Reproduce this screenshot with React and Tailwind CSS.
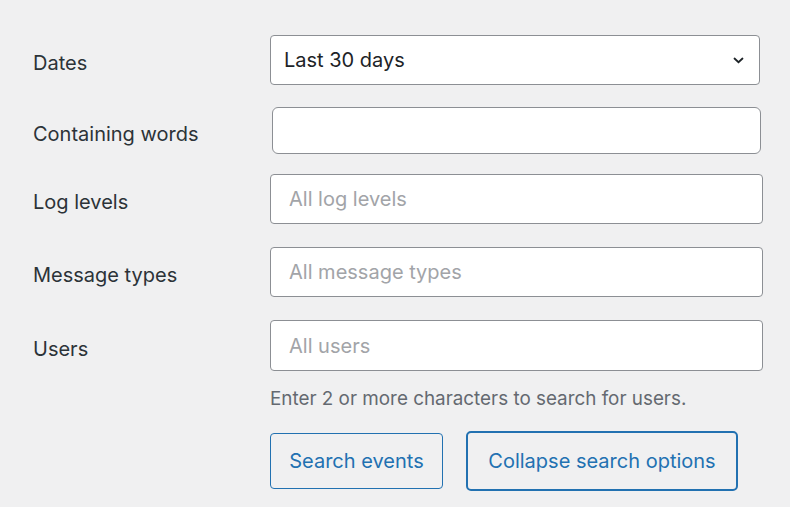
import { useState } from 'react';

const font = { fontFamily: 'Inter, "Noto Sans", sans-serif' };

function Row({ label, children, className = '' }) {
  return (
    <div className={`flex items-center ${className}`}>
      <label className="w-[237px] shrink-0 pt-[6px] text-[20px] text-[#2c3338]">{label}</label>
      {children}
    </div>
  );
}

function TextBox({ placeholder, className = '' }) {
  return (
    <input
      type="text"
      placeholder={placeholder}
      className={`h-[50px] w-[493px] rounded-[4px] border border-[#8c8f94] bg-white px-[18px] text-[20px] text-[#2c3338] outline-none placeholder:text-[#a2a4a8] ${className}`}
    />
  );
}

export default function App() {
  const [dates] = useState('Last 30 days');

  return (
    <div className="min-h-screen w-[790px] h-[507px] overflow-hidden bg-[#f0f0f1] pl-[33px] pt-[35px]" style={font}>
      <Row label="Dates">
        <div className="relative h-[50px] w-[490px] rounded-[4px] border border-[#8c8f94] bg-white">
          <div className="flex h-full items-center pl-[13px] text-[20px] text-[#1d2327]">{dates}</div>
          <svg className="absolute right-[15px] top-[21px]" width="11" height="7" viewBox="0 0 11 7">
            <path d="M1.5 1.5 L5.5 5.2 L9.5 1.5" fill="none" stroke="#1d2327" strokeWidth="1.8" strokeLinecap="round" />
          </svg>
        </div>
      </Row>

      <Row label="Containing words" className="mt-[22px]">
        <input
          type="text"
          className="ml-[2px] h-[47px] w-[489px] rounded-[6px] border border-[#8c8f94] bg-white px-[18px] text-[20px] outline-none"
        />
      </Row>

      <Row label="Log levels" className="mt-[20px]">
        <TextBox placeholder="All log levels" />
      </Row>

      <Row label="Message types" className="mt-[23px]">
        <TextBox placeholder="All message types" />
      </Row>

      <Row label="Users" className="mt-[23px]">
        <TextBox placeholder="All users" className="h-[51px]" />
      </Row>

      <div className="ml-[237px]">
        <p className="mt-[16px] text-[18.85px] leading-[24px] text-[#646970]">Enter 2 or more characters to search for users.</p>
        <div className="mt-[20px] flex items-center gap-[23px]">
          <button className="h-[56px] w-[173px] rounded-[4px] border border-[#2271b1] bg-transparent text-[20px] text-[#2271b1]">
            Search events
          </button>
          <button className="h-[60px] w-[272px] rounded-[5px] border-2 border-[#2271b1] bg-transparent text-[20px] text-[#2271b1]">
            Collapse search options
          </button>
        </div>
      </div>
    </div>
  );
}
